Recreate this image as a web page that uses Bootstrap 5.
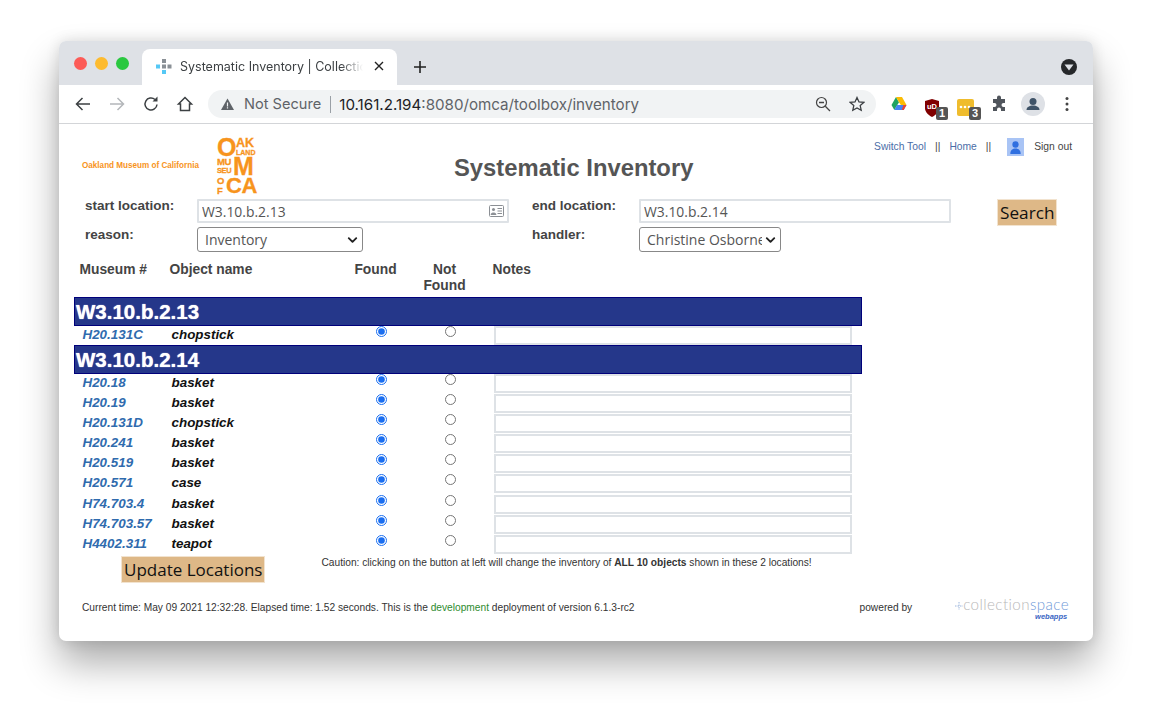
<!DOCTYPE html>
<html lang="en">
<head>
  <meta charset="UTF-8" />
  <meta name="viewport" content="width=device-width, initial-scale=1.0" />
  <title>Systematic Inventory</title>
  <link href="https://cdn.jsdelivr.net/npm/bootstrap@5.3.3/dist/css/bootstrap.min.css" rel="stylesheet" />
  <style>
    html, body { height: 719px; overflow: hidden; }
    body { background: #fff; padding: 41px 59px 0; font-family: "Liberation Sans", Arial, sans-serif; color: #333; }
    .win { width: 1034px; height: 600px; border-radius: 7px; background: #fff; box-shadow: 0 22px 38px rgba(0,0,0,.33), 0 0 14px rgba(0,0,0,.12); overflow: hidden; }

    /* browser chrome */
    .tabstrip { height: 44px; background: #dee1e6; padding-left: 15px; }
    .light { width: 13px; height: 13px; border-radius: 50%; margin-right: 8px; margin-top: 16px; }
    .light-red { background: #fc5b57; }
    .light-amber { background: #fdbb2f; }
    .light-green { background: #2ac840; }
    .tabbox { width: 255px; height: 36px; margin-left: 5px; margin-top: 8px; background: #fff; border-radius: 8px 8px 0 0; padding: 0 0 2px 13px; font: 12.5px Inter, Roboto, sans-serif; color: #3c4043; }
    .tabtitle { width: 183px; margin-left: 8px; white-space: nowrap; overflow: hidden; -webkit-mask-image: linear-gradient(90deg, #000 88%, transparent); mask-image: linear-gradient(90deg, #000 88%, transparent); }
    .tabclose { margin-left: 10px; }
    .plus { margin-left: 16px; margin-top: 19px; }
    .menuchev { margin-left: auto; margin-right: 16px; margin-top: 18px; }
    .toolbar { height: 39px; border-bottom: 1px solid #d3d5d8; padding-left: 15px; }
    .tbtn { width: 18px; height: 18px; margin-right: 16px; flex: none; }
    .omni { width: 668px; height: 28px; margin-left: -2px; margin-right: 14px; border-radius: 14px; background: #f1f3f4; padding: 0 11px 0 13px; font: 14.6px Inter, Roboto, sans-serif; color: #5f6368; white-space: nowrap; }
    .omni-warn { margin-right: 10px; }
    .omni-url { font-size: 15.15px; }
    .omni b { font-weight: 400; color: #202124; }
    .vrule { width: 1px; height: 17px; background: #9aa0a6; margin: 0 8px 0 9px; }
    .omni-star { margin-left: 18px; }
    .extwrap { position: relative; width: 18px; height: 18px; margin-right: 15px; }
    .extbadge { position: absolute; right: -6px; bottom: -7px; background: #555; color: #fff; border-radius: 2px; font: bold 11px/13px "Liberation Sans", sans-serif; padding: 0 3px; }
    .puzzle { margin-right: 13px; }
    .dots { margin-left: 20px; }

    /* page header */
    .topband { height: 75px; }
    .orgname { width: 135px; margin-left: 23px; margin-top: 36px; color: #f7941d; font-size: 8.15px; font-weight: 700; white-space: nowrap; }
    .omlogo { width: 41px; margin-top: 14px; color: #f7941d; font-weight: 700; line-height: 1; white-space: nowrap; -webkit-text-stroke: .3px #f7941d; }
    .omrow { height: 19px; }
    .omrow-b { height: 18px; margin-bottom: 1px; }
    .omcol { display: flex; flex-direction: column; }
    .om-o { font-size: 25px; line-height: 19px; width: 19px; }
    .om-ak { font-size: 12.5px; line-height: 11px; }
    .om-land { font-size: 7px; line-height: 8px; }
    .om-mu { font-size: 9.5px; line-height: 10px; width: 16px; letter-spacing: -.4px; }
    .om-seu { font-size: 7.5px; line-height: 8px; width: 16px; letter-spacing: -.4px; }
    .om-m { font-size: 25px; line-height: 18px; }
    .om-of { font-size: 9.5px; line-height: 9.5px; width: 9px; }
    .om-ca { font-size: 22px; line-height: 19px; letter-spacing: -.4px; }
    .apptitle { margin: 30px 0 0 196px; font-size: 23.8px; font-weight: 700; color: #555; line-height: 28px; white-space: nowrap; }
    .toplinks { margin-left: auto; margin-top: 13px; margin-right: 21px; font-size: 10.3px; line-height: 19px; color: #444; white-space: nowrap; }
    .toplinks a { color: #4a6da7; text-decoration: none; }
    .seps { margin: 0 9px; }
    .usericon { width: 17px; height: 18px; margin: 0 10px 0 7px; }

    /* search form */
    .formline { padding-left: 26px; }
    .formline-b { margin-top: 1px; }
    .formlabel { flex: none; font-size: 13.5px; font-weight: 700; color: #444; line-height: 15px; margin-top: -1px; }
    .lab-start { width: 112px; }
    .lab-end { width: 107px; margin-left: 23px; }
    .lab-reason { width: 112px; margin-top: 0; }
    .lab-handler { width: 107px; margin-left: 169px; margin-top: 0; }
    .form-control.locbox { width: 312px; height: 24px; padding: 0 3px; border: 2px solid #dee2e6; border-radius: 1px; font: 13.9px "Open Sans", sans-serif; color: #555; }
    .form-select.pickbox { height: 25px; padding: 0 18px 0 7px; border: 1px solid #888; border-radius: 3px; font: 14px "Open Sans", sans-serif; color: #555; background-image: url("data:image/svg+xml,%3csvg xmlns='http://www.w3.org/2000/svg' viewBox='0 0 16 16'%3e%3cpath fill='none' stroke='%23222' stroke-linecap='round' stroke-linejoin='round' stroke-width='3' d='m2 5 6 6 6-6'/%3e%3c/svg%3e"); background-position: right 4px center; background-size: 11px 10px; }
    .pick-reason { width: 166px; }
    .pick-handler { width: 142px; }
    .boxwrap { position: relative; width: 312px; }
    .cardglyph { position: absolute; right: 5px; top: 6px; width: 15px; height: 12px; }
    .tanbtn { background: #deb887; border: 1px solid #f2e3cf; border-radius: 0; color: #111; font-family: "Open Sans", sans-serif; font-size: 17.2px; line-height: 25px; padding: 0 2px; }
    .searchbtn { margin-left: 46px; }
    .updbtn { font-size: 17px; }

    /* results */
    .inv { width: 788px; margin: 10px 0 0 15px; table-layout: fixed; border-collapse: collapse; }
    .col-num { width: 95px; }
    .col-obj { width: 177px; }
    .col-found { width: 70px; }
    .col-notfound { width: 68px; }
    .inv th { font-size: 13.8px; font-weight: 700; color: #444; line-height: 16px; padding: 0 0 3px; vertical-align: top; }
    .inv th.ctr { text-align: center; padding-right: 12px; }
    .inv th.th-num { padding-left: 5px; }
    .inv th.th-notes { padding-left: 8px; }
    .inv td { padding: 0; vertical-align: top; height: 20.17px; }
    .inv .locbar td { height: 28px; background: #25378a; border: 1px solid #00007a; color: #fff; font-size: 20.5px; font-weight: 700; line-height: 25px; padding: 1px 0 0 1px; text-shadow: 0 0 1px #fff; }
    .objnum, .objname { font-size: 13.4px; font-weight: 700; font-style: italic; line-height: 17px; }
    .inv td.objnum { padding-left: 8px; color: #2f6bae; }
    .inv td.objname { padding-left: 2px; color: #111; }
    .radiocell { text-align: center; line-height: 11px; }
    .radiocell input { width: 11px; height: 11px; margin: 0; accent-color: #1a6ef0; }
    .notebox { display: block; width: 358px; height: 19px; margin: 0 0 0 9px; border: 2px solid #dee2e6; padding: 0; background: #fff; }

    .updline { height: 26px; margin-top: 1px; padding-left: 62px; }
    .caution { margin: 0 0 0 56px; font-size: 10.2px; line-height: 14px; color: #333; white-space: nowrap; }
    .foot { margin-top: 18px; padding-left: 23px; font-size: 10.2px; color: #333; white-space: nowrap; }
    .foot em { font-style: normal; color: #2e8b2e; }
    .poweredby { margin-left: 225px; }
    .cslogo { width: 112px; margin-left: 43px; text-align: right; line-height: 1; margin-top: -4px; }
    .csword { font: 300 15.2px/16px Lato, sans-serif; color: #b8b8b8; letter-spacing: .4px; white-space: nowrap; }
    .csword span { color: #6f9ad8; }
    .cssub { font-size: 7.5px; font-weight: 700; font-style: italic; color: #3a66c4; line-height: 9px; }
  </style>
</head>
<body>
  <div class="win">
    <!-- browser tabs -->
    <div class="tabstrip d-flex align-items-start">
      <span class="light light-red"></span>
      <span class="light light-amber"></span>
      <span class="light light-green"></span>
      <div class="tabbox d-flex align-items-center">
        <svg width="17" height="17" viewBox="0 0 17 17"><rect x="7" y="1" width="4" height="4" fill="#8a9096"/><rect x="7" y="6.500" width="4" height="4" fill="#8a9096"/><rect x="12.500" y="6.500" width="4" height="4" fill="#8a9096"/><rect x="1" y="6.500" width="4" height="4" fill="#55c8f5"/><rect x="7" y="12" width="4" height="4" fill="#55c8f5"/></svg>
        <span class="tabtitle">Systematic Inventory | Collection</span>
        <svg class="tabclose" width="12" height="12" viewBox="0 0 12 12"><path d="M2 2l8 8M10 2l-8 8" stroke="#222" stroke-width="1.400"/></svg>
      </div>
      <svg class="plus" width="14" height="14" viewBox="0 0 14 14"><path d="M7 1v12M1 7h12" stroke="#222" stroke-width="1.600"/></svg>
      <svg class="menuchev" width="16" height="16" viewBox="0 0 16 16"><circle cx="8" cy="8" r="8" fill="#26282b"/><path d="M3.500 5.500h9L8 11.500z" fill="#dee1e6"/></svg>
    </div>
    <!-- address bar -->
    <div class="toolbar d-flex align-items-center">
      <svg class="tbtn" viewBox="0 0 18 18"><path d="M16 9H3M8.500 3L2.500 9l6 6" fill="none" stroke="#3c4043" stroke-width="1.500"/></svg>
      <svg class="tbtn" viewBox="0 0 18 18"><path d="M2 9h13M9.500 3l6 6-6 6" fill="none" stroke="#b4b7ba" stroke-width="1.500"/></svg>
      <svg class="tbtn" viewBox="0 0 18 18"><path d="M15 9.500A6 6 0 1 1 13 4.500" fill="none" stroke="#3c4043" stroke-width="1.500"/><path d="M15.500 1.500v5h-5z" fill="#3c4043"/></svg>
      <svg class="tbtn" viewBox="0 0 18 18"><path d="M9 2.500L2.500 9H4.500v6.500h9V9h2z" fill="none" stroke="#3c4043" stroke-width="1.500"/></svg>
      <div class="omni d-flex align-items-center">
        <svg class="omni-warn" width="13" height="12" viewBox="0 0 13 12"><path d="M6.500.5L13 12H0z" fill="#5f6368"/><path d="M6.500 4.500v4M6.500 9.300v1.300" stroke="#f1f3f4" stroke-width="1.200"/></svg>
        <span>Not Secure</span><span class="vrule"></span>
        <span class="omni-url"><b>10.161.2.194</b>:8080/omca/toolbox/inventory</span>
        <svg class="ms-auto" width="16" height="16" viewBox="0 0 16 16"><circle cx="6.500" cy="6.500" r="5" fill="none" stroke="#444" stroke-width="1.200"/><path d="M4 6.500h5M10.300 10.300L15 15" stroke="#444" stroke-width="1.300"/></svg>
        <svg class="omni-star" width="16" height="16" viewBox="0 0 16 16"><path d="M8 1.500l2 4.400 4.800.5-3.600 3.200 1 4.700L8 11.900l-4.200 2.400 1-4.700L1.200 6.400 6 5.900z" fill="none" stroke="#3c4043" stroke-width="1.300"/></svg>
      </div>
      <svg class="tbtn" viewBox="0 0 18 18"><path d="M6 2L1.500 10l2.800 5L9 7.200z" fill="#1ea362"/><path d="M6 2h6l4.500 8h-5.600L9 7.200 6 2z" fill="#fbbc04"/><path d="M4.300 15h9.400l2.800-5H7z" fill="#4285f4"/><path d="M13.700 15l2.800-5h-3.200L11.800 15z" fill="#ea4335"/></svg>
      <div class="extwrap">
        <svg width="16" height="18" viewBox="0 0 16 18"><path d="M8 0l7 2v7c0 4-3 7-7 9-4-2-7-5-7-9V2z" fill="#800000"/><text x="8" y="10" text-anchor="middle" font-family="Liberation Sans" font-weight="700" font-size="7.500" fill="#fff">uD</text></svg>
        <span class="extbadge">1</span>
      </div>
      <div class="extwrap">
        <svg width="17" height="17" viewBox="0 0 17 17"><rect width="17" height="17" rx="2" fill="#efbc2d"/><circle cx="4" cy="8" r="1.300" fill="#fff"/><circle cx="8" cy="8" r="1.300" fill="#fff"/><circle cx="12" cy="8" r="1.300" fill="#fff"/></svg>
        <span class="extbadge">3</span>
      </div>
      <svg class="tbtn puzzle" viewBox="0 0 18 18"><path d="M7 2.500a2 2 0 0 1 4 0V4h4v4h-1.500a2 2 0 0 0 0 4H15v4h-4v-1.500a2 2 0 0 0-4 0V16H3v-4h1.500a2 2 0 0 0 0-4H3V4h4z" fill="#50555c"/></svg>
      <svg width="24" height="24" viewBox="0 0 24 24"><circle cx="12" cy="12" r="12" fill="#dee1e6"/><circle cx="12" cy="9.500" r="3.500" fill="#3f5368"/><path d="M5.500 18c0-3 3-4.500 6.500-4.500s6.500 1.500 6.500 4.500z" fill="#3f5368"/></svg>
      <svg class="dots" width="4" height="16" viewBox="0 0 4 16"><circle cx="2" cy="2.500" r="1.500" fill="#444"/><circle cx="2" cy="8" r="1.500" fill="#444"/><circle cx="2" cy="13.500" r="1.500" fill="#444"/></svg>
    </div>

    <!-- page -->
    <div class="topband d-flex align-items-start">
      <div class="orgname">Oakland Museum of California</div>
      <div class="omlogo">
        <div class="omrow d-flex"><span class="om-o">O</span><span class="omcol"><span class="om-ak">AK</span><span class="om-land">LAND</span></span></div>
        <div class="omrow-b d-flex"><span class="omcol"><span class="om-mu">MU</span><span class="om-seu">SEU</span></span><span class="om-m">M</span></div>
        <div class="omrow d-flex"><span class="omcol"><span class="om-of">O</span><span class="om-of">F</span></span><span class="om-ca">CA</span></div>
      </div>
      <div class="apptitle">Systematic Inventory</div>
      <div class="toplinks d-flex align-items-center">
        <a href="#">Switch Tool</a><span class="seps">||</span><a href="#">Home</a><span class="seps">||</span>
        <svg class="usericon" viewBox="0 0 18 18" preserveAspectRatio="none"><rect width="18" height="18" fill="#a9c4f5"/><circle cx="9" cy="6.500" r="3.300" fill="#2f6fe0"/><path d="M3.500 16c0-4 2.500-5.500 5.500-5.500s5.500 1.500 5.500 5.500z" fill="#2f6fe0"/></svg>
        <span>Sign out</span>
      </div>
    </div>

    <div class="formline d-flex align-items-start">
      <div class="formlabel lab-start">start location:</div>
      <div class="boxwrap">
        <input class="form-control locbox" value="W3.10.b.2.13" />
        <svg class="cardglyph" viewBox="0 0 15 12"><rect x=".5" y=".5" width="14" height="11" rx="1" fill="none" stroke="#8b8f94"/><circle cx="4.500" cy="4.500" r="1.500" fill="#8b8f94"/><path d="M2 9.500c0-2 5-2 5 0zM8.500 3.500h4.500M8.500 6h4.500M8.500 8.500h4.500" fill="#8b8f94" stroke="#8b8f94"/></svg>
      </div>
      <div class="formlabel lab-end">end location:</div>
      <input class="form-control locbox" value="W3.10.b.2.14" />
      <button class="btn tanbtn searchbtn" type="button">Search</button>
    </div>
    <div class="formline formline-b d-flex align-items-start">
      <div class="formlabel lab-reason">reason:</div>
      <select class="form-select pickbox pick-reason"><option>Inventory</option></select>
      <div class="formlabel lab-handler">handler:</div>
      <select class="form-select pickbox pick-handler"><option>Christine Osborne</option></select>
    </div>

    <table class="inv">
      <colgroup><col class="col-num"><col class="col-obj"><col class="col-found"><col class="col-notfound"><col></colgroup>
      <thead>
        <tr><th class="th-num">Museum #</th><th>Object name</th><th class="ctr">Found</th><th class="ctr">Not<br>Found</th><th class="th-notes">Notes</th></tr>
      </thead>
      <tbody id="rows"></tbody>
    </table>

    <div class="updline d-flex align-items-start">
      <button class="btn tanbtn updbtn" type="button">Update Locations</button>
      <p class="caution">Caution: clicking on the button at left will change the inventory of <strong>ALL 10 objects</strong> shown in these 2 locations!</p>
    </div>

    <div class="foot d-flex align-items-start">
      <span>Current time: May 09 2021 12:32:28. Elapsed time: 1.52 seconds. This is the <em>development</em> deployment of version 6.1.3-rc2</span>
      <span class="poweredby">powered by</span>
      <div class="cslogo">
        <div class="csword"><svg width="8" height="8" viewBox="0 0 8 8"><path d="M0 4h8M4 0v8" stroke="#9db6dc" stroke-width="1" stroke-dasharray="1.500 1"/></svg>collection<span>space</span></div>
        <div class="cssub">webapps</div>
      </div>
    </div>
  </div>

  <script src="https://cdn.jsdelivr.net/npm/bootstrap@5.3.3/dist/js/bootstrap.bundle.min.js"></script>
  <script>
    const groups = [
      ['W3.10.b.2.13', [['H20.131C', 'chopstick']]],
      ['W3.10.b.2.14', [['H20.18', 'basket'], ['H20.19', 'basket'], ['H20.131D', 'chopstick'], ['H20.241', 'basket'],
        ['H20.519', 'basket'], ['H20.571', 'case'], ['H74.703.4', 'basket'], ['H74.703.57', 'basket'], ['H4402.311', 'teapot']]]
    ];
    let html = '', n = 0;
    groups.forEach(([loc, items]) => {
      html += `<tr class="locbar"><td colspan="5">${loc}</td></tr>`;
      items.forEach(([num, name]) => {
        n++;
        html += `<tr><td class="objnum">${num}</td><td class="objname">${name}</td>` +
          `<td class="radiocell"><input type="radio" name="r${n}" checked></td>` +
          `<td class="radiocell"><input type="radio" name="r${n}"></td>` +
          `<td><input class="notebox" type="text"></td></tr>`;
      });
    });
    document.getElementById('rows').innerHTML = html;
  </script>
</body>
</html>
